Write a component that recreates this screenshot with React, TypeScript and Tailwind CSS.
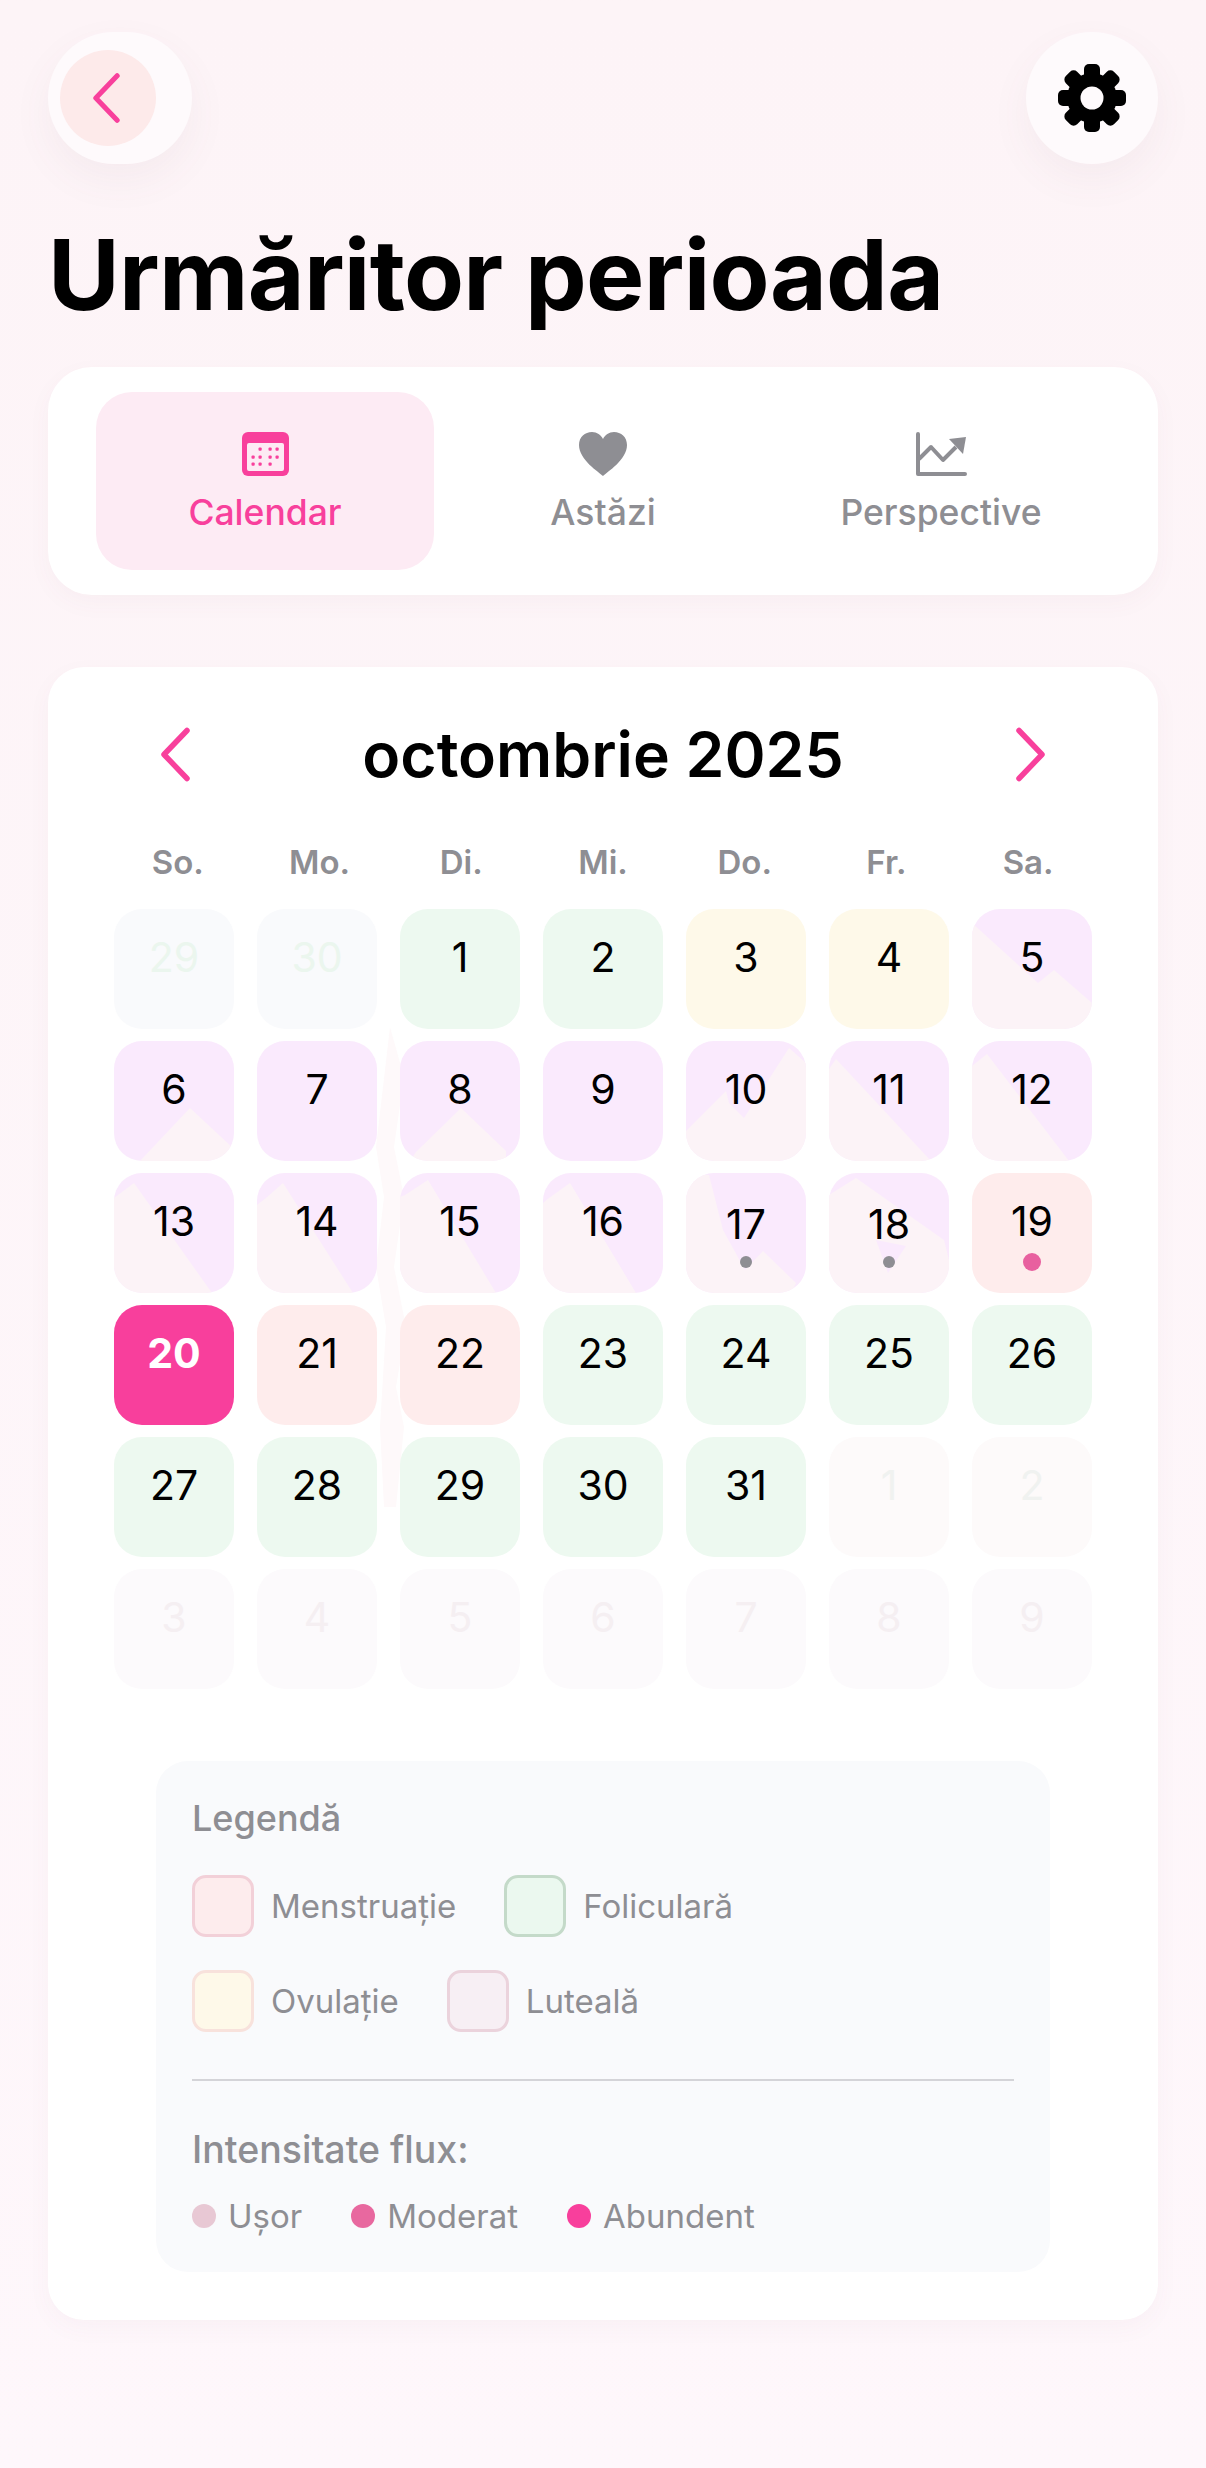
type Kind = "green" | "yellow" | "purple" | "red" | "today" | "prev" | "next" | "nextFaint";

interface Day {
  n: number;
  kind: Kind;
  overlay?: string;
  notch?: string;
  dot?: "gray" | "pink";
}

const cellStyle: Record<Kind, string> = {
  green: "bg-[#edf9f0] text-black",
  yellow: "bg-[#fef9e9] text-black",
  purple: "bg-[#faeafd] text-black",
  red: "bg-[#feecec] text-black",
  today: "bg-[#f83f9c] text-white font-bold",
  prev: "bg-[#f9fafc] text-[#ebf6ee]",
  next: "bg-[#fdfafa] text-[#f0f2f0]",
  nextFaint: "bg-[#fcfafc] text-[#f5eff2]",
};

const days: Day[] = [
  { n: 29, kind: "prev" },
  { n: 30, kind: "prev" },
  { n: 1, kind: "green" },
  { n: 2, kind: "green" },
  { n: 3, kind: "yellow" },
  { n: 4, kind: "yellow" },
  { n: 5, kind: "purple", overlay: "0,14 66,74 82,61 120,94 120,120 0,120" },
  { n: 6, kind: "purple", overlay: "26,120 76,67 120,108 120,120" },
  { n: 7, kind: "purple" },
  { n: 8, kind: "purple", overlay: "10,120 16,111 61,67 106,110 106,120" },
  { n: 9, kind: "purple" },
  { n: 10, kind: "purple", overlay: "0,90 40,50 43,62 58,77 103,7 120,22 120,120 0,120" },
  { n: 11, kind: "purple", overlay: "0,28 7,18 102,120 0,120" },
  { n: 12, kind: "purple", overlay: "0,25 15,13 97,120 0,120" },
  { n: 13, kind: "purple", overlay: "0,25 20,10 98,120 0,120" },
  { n: 14, kind: "purple", overlay: "0,32 9,25 26,10 96,120 0,120" },
  { n: 15, kind: "purple", overlay: "0,24 5,22 28,7 96,120 0,120" },
  { n: 16, kind: "purple", overlay: "0,30 6,25 27,10 93,120 0,120" },
  { n: 17, kind: "purple", overlay: "0,5 10,1 23,2 37,57 59,97 77,78 110,110 105,120 0,120", dot: "gray" },
  { n: 18, kind: "purple", overlay: "0,22 27,5 115,67 120,87 120,120 0,120", notch: "47,67 59,100 77,73", dot: "gray" },
  { n: 19, kind: "red", dot: "pink" },
  { n: 20, kind: "today" },
  { n: 21, kind: "red" },
  { n: 22, kind: "red" },
  { n: 23, kind: "green" },
  { n: 24, kind: "green" },
  { n: 25, kind: "green" },
  { n: 26, kind: "green" },
  { n: 27, kind: "green" },
  { n: 28, kind: "green" },
  { n: 29, kind: "green" },
  { n: 30, kind: "green" },
  { n: 31, kind: "green" },
  { n: 1, kind: "next" },
  { n: 2, kind: "next" },
  { n: 3, kind: "nextFaint" },
  { n: 4, kind: "nextFaint" },
  { n: 5, kind: "nextFaint" },
  { n: 6, kind: "nextFaint" },
  { n: 7, kind: "nextFaint" },
  { n: 8, kind: "nextFaint" },
  { n: 9, kind: "nextFaint" },
];

const weekdays = ["So.", "Mo.", "Di.", "Mi.", "Do.", "Fr.", "Sa."];

function Chevron({ dir, className }: { dir: "left" | "right"; className: string }) {
  return (
    <svg viewBox="0 0 31 54" className={className} fill="none" stroke="#f8409c" strokeWidth="5.5" strokeLinecap="round" strokeLinejoin="round">
      <polyline points={dir === "left" ? "27,3 4,27 27,51" : "4,3 27,27 4,51"} />
    </svg>
  );
}

function Gear() {
  return (
    <svg viewBox="0 0 68 68" className="w-[68px] h-[68px]">
      {[0, 45, 90, 135].map((a) => (
        <rect key={a} x="26" y="0" width="16" height="68" rx="5" fill="black" transform={`rotate(${a} 34 34)`} />
      ))}
      <circle cx="34" cy="34" r="25" fill="black" />
      <circle cx="34" cy="34" r="11.5" fill="#fefafc" />
    </svg>
  );
}

function CalendarIcon() {
  return (
    <svg viewBox="0 0 47 44" className="w-[47px] h-[44px]">
      <rect x="0" y="0" width="47" height="44" rx="6" fill="#f8409c" />
      <rect x="5" y="11" width="37" height="28" rx="2" fill="#fdebf4" />
      {[
        [18, 17], [28, 17], [35, 17],
        [11, 25], [18, 25], [28, 25], [35, 25],
        [11, 32], [18, 32], [28, 32],
      ].map(([x, y]) => (
        <rect key={`${x}-${y}`} x={x - 1.5} y={y - 1.5} width="3.2" height="3.2" rx="1" fill="#f8409c" />
      ))}
    </svg>
  );
}

function HeartIcon() {
  return (
    <svg viewBox="0 0 48 44" className="w-[48px] h-[44px]">
      <path d="M24 44C20 40 0 28 0 13C0 5 6 0 13 0C18 0 22 3 24 7C26 3 30 0 35 0C42 0 48 5 48 13C48 28 28 40 24 44Z" fill="#8e8e93" />
    </svg>
  );
}

function ChartIcon() {
  return (
    <svg viewBox="0 0 51 44" className="w-[51px] h-[44px]">
      <path d="M2 2V42H49" fill="none" stroke="#8e8e93" strokeWidth="4" strokeLinecap="round" strokeLinejoin="round" />
      <path d="M3 27L15 15L27 28L40 15" fill="none" stroke="#8e8e93" strokeWidth="4" strokeLinejoin="round" />
      <path d="M33 7L50 5L47 22Z" fill="#8e8e93" />
    </svg>
  );
}

function Tab({ label, active, icon }: { label: string; active?: boolean; icon: React.ReactNode }) {
  return (
    <div className={`h-[178px] rounded-[36px] flex flex-col items-center pt-[40px] ${active ? "bg-[#fdebf4]" : ""}`}>
      {icon}
      <span className={`mt-[14px] text-[35.5px] leading-[46px] font-medium ${active ? "text-[#f8409c]" : "text-[#8e8e93]"}`}>{label}</span>
    </div>
  );
}

function Cell({ day }: { day: Day }) {
  return (
    <div className={`relative w-[120px] h-[120px] rounded-[28px] overflow-hidden flex justify-center ${cellStyle[day.kind]}`}>
      {day.overlay && (
        <svg viewBox="0 0 120 120" className="absolute inset-0 w-full h-full">
          <polygon points={day.overlay} fill="#fcf3f7" />
          {day.notch && <polygon points={day.notch} fill="#faeafd" />}
        </svg>
      )}
      <span className={`relative text-[41px] leading-[50px] ${day.dot === "gray" ? "mt-[26px]" : "mt-[23px]"}`}>{day.n}</span>
      {day.dot === "gray" && <span className="absolute left-[54px] top-[83px] w-[12px] h-[12px] rounded-full bg-[#8e8e93]" />}
      {day.dot === "pink" && <span className="absolute left-[51px] top-[80px] w-[18px] h-[18px] rounded-full bg-[#e8609f]" />}
    </div>
  );
}

function Swatch({ label, className }: { label: string; className: string }) {
  return (
    <div className="flex items-center gap-[17px]">
      <span className={`w-[62px] h-[62px] rounded-[14px] border-[3px] ${className}`} />
      <span className="text-[33px] leading-[40px] text-[#8e8e93]">{label}</span>
    </div>
  );
}

function Flow({ label, className }: { label: string; className: string }) {
  return (
    <div className="flex items-center gap-[12px]">
      <span className={`w-[24px] h-[24px] rounded-full ${className}`} />
      <span className="text-[33px] leading-[40px] text-[#8e8e93]">{label}</span>
    </div>
  );
}

export default function App() {
  return (
    <div className="min-h-[2468px] bg-gradient-to-b from-[#fdf4f7] to-[#fef7fb] font-['Inter',sans-serif] text-black overflow-hidden">
      <div className="flex justify-between px-[48px] pt-[32px]">
        <button className="w-[144px] h-[132px] rounded-full bg-[#fefafc] shadow-[0_16px_40px_rgba(120,80,100,0.06)] flex items-center pl-[12px]">
          <span className="w-[96px] h-[96px] rounded-full bg-[#fdeaea] flex items-center justify-center pr-[4px]">
            <Chevron dir="left" className="w-[29px] h-[50px]" />
          </span>
        </button>
        <button className="w-[132px] h-[132px] rounded-full bg-[#fefafc] shadow-[0_16px_40px_rgba(120,80,100,0.06)] flex items-center justify-center">
          <Gear />
        </button>
      </div>

      <h1 className="mt-[51px] ml-[48px] text-[98px] leading-[120px] font-bold tracking-[-0.7px]">Urmăritor perioada</h1>

      <div className="mt-[32px] mx-[48px] h-[228px] rounded-[44px] bg-white shadow-[0_8px_24px_rgba(120,80,100,0.04)] px-[48px] pt-[25px] grid grid-cols-3 items-start">
        <Tab label="Calendar" active icon={<CalendarIcon />} />
        <Tab label="Astăzi" icon={<HeartIcon />} />
        <Tab label="Perspective" icon={<ChartIcon />} />
      </div>

      <div className="relative mt-[72px] mx-[48px] h-[1653px] rounded-[36px] bg-white shadow-[0_8px_24px_rgba(120,80,100,0.04)] px-[66px]">
        <svg viewBox="0 0 40 480" className="absolute left-[322px] top-[360px] w-[40px] h-[480px]">
          <path d="M20 0L34 50L24 120L34 170L24 240L36 300L26 360L34 400L26 480H14L10 400L16 300L6 240L14 170L6 120Z" fill="#fef9fa" />
        </svg>

        <div className="relative flex items-center justify-between h-[175px] px-[46px]">
          <Chevron dir="left" className="w-[31px] h-[55px]" />
          <h2 className="text-[62.4px] leading-[76px] font-semibold">octombrie 2025</h2>
          <Chevron dir="right" className="w-[31px] h-[55px]" />
        </div>

        <div className="relative grid grid-cols-7 -mx-[7px] h-[67px]">
          {weekdays.map((d) => (
            <span key={d} className="text-center text-[33px] leading-[40px] font-semibold text-[#8e8e93]">{d}</span>
          ))}
        </div>

        <div className="relative grid grid-cols-[repeat(7,120px)] gap-x-[23px] gap-y-[12px]">
          {days.map((d, i) => (
            <Cell key={i} day={d} />
          ))}
        </div>

        <div className="relative mt-[72px] ml-[42px] w-[894px] h-[511px] rounded-[32px] bg-[#f9fafc] px-[36px] pt-[37px]">
          <div className="text-[36px] leading-[40px] font-medium text-[#8e8e93]">Legendă</div>
          <div className="mt-[37px] flex flex-wrap gap-x-[48px]">
            <Swatch label="Menstruație" className="bg-[#fdeced] border-[#f2d0d8]" />
            <Swatch label="Foliculară" className="bg-[#ebf8ef] border-[#c4dac9]" />
          </div>
          <div className="mt-[33px] flex flex-wrap gap-x-[48px]">
            <Swatch label="Ovulație" className="bg-[#fef9e9] border-[#f8e2dc]" />
            <Swatch label="Luteală" className="bg-[#f7eff4] border-[#ebd3dc]" />
          </div>
          <div className="mt-[47px] h-[2px] bg-[#d4d4d8]" />
          <div className="mt-[49px] text-[37.5px] leading-[40px] font-medium text-[#8e8e93]">Intensitate flux:</div>
          <div className="mt-[26px] flex gap-x-[49px]">
            <Flow label="Ușor" className="bg-[#e8c8d4]" />
            <Flow label="Moderat" className="bg-[#e8689f]" />
            <Flow label="Abundent" className="bg-[#f83f9c]" />
          </div>
        </div>
      </div>
    </div>
  );
}
